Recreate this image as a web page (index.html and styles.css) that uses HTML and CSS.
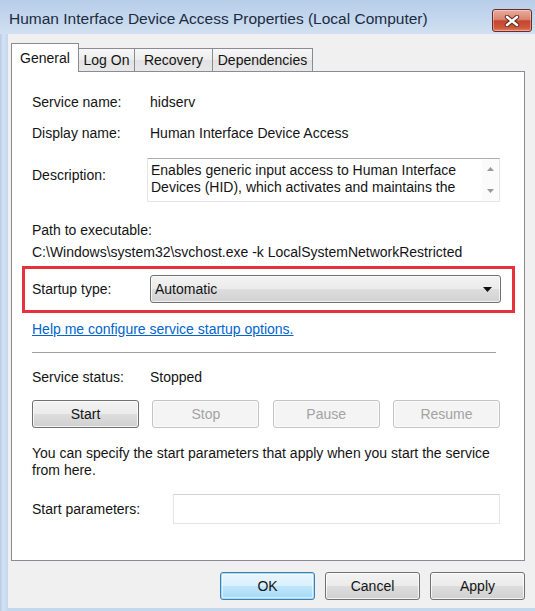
FILE: index.html
```html
<!DOCTYPE html>
<html>
<head>
<meta charset="utf-8">
<title>Human Interface Device Access Properties</title>
<link rel="stylesheet" href="styles.css">
</head>
<body>
<div class="window">
  <header class="titlebar">
    <span class="title">Human Interface Device Access Properties (Local Computer)</span>
    <div class="close">
      <svg width="16" height="12" viewBox="0 0 16 12">
        <path d="M3 2 L13 10 M13 2 L3 10" stroke="#5b211a" stroke-width="4.4" stroke-linecap="round"/>
        <path d="M3 2 L13 10 M13 2 L3 10" stroke="#ffffff" stroke-width="2.6" stroke-linecap="round"/>
      </svg>
    </div>
  </header>
  <div class="client">
    <div class="tabs">
      <div class="tab active t-general">General</div>
      <div class="tab t-logon">Log On</div>
      <div class="tab t-recovery">Recovery</div>
      <div class="tab t-deps">Dependencies</div>
    </div>
    <div class="panel">
      <div class="field r1"><span class="label">Service name:</span><span class="value">hidserv</span></div>
      <div class="field r2"><span class="label">Display name:</span><span class="value">Human Interface Device Access</span></div>
      <div class="field desc-row">
        <span class="label desc-label">Description:</span>
        <div class="desc">
          <div class="desc-text">Enables generic input access to Human Interface<br>Devices (HID), which activates and maintains the</div>
          <div class="scroll">
            <svg width="7" height="4" viewBox="0 0 7 4"><path d="M0 4 L3.5 0 L7 4 Z" fill="#9a9a9a"/></svg>
            <svg width="7" height="4" viewBox="0 0 7 4"><path d="M0 0 L3.5 4 L7 0 Z" fill="#9a9a9a"/></svg>
          </div>
        </div>
      </div>
      <div class="path">
        <div>Path to executable:</div>
        <div>C:\Windows\system32\svchost.exe -k LocalSystemNetworkRestricted</div>
      </div>
      <div class="highlight">
        <div class="field startup">
          <span class="label">Startup type:</span>
          <div class="combo">
            <span>Automatic</span>
            <svg width="9" height="5" viewBox="0 0 9 5"><path d="M0 0 L9 0 L4.5 5 Z" fill="#111"/></svg>
          </div>
        </div>
      </div>
      <a class="link" href="#">Help me configure service startup options.</a>
      <div class="sep"></div>
      <div class="field status"><span class="label">Service status:</span><span class="value">Stopped</span></div>
      <div class="ctrl-buttons">
        <button class="btn">Start</button>
        <button class="btn disabled">Stop</button>
        <button class="btn disabled">Pause</button>
        <button class="btn disabled">Resume</button>
      </div>
      <p class="note">You can specify the start parameters that apply when you start the service<br>from here.</p>
      <div class="field params"><span class="label">Start parameters:</span><div class="input"></div></div>
    </div>
    <div class="footer">
      <button class="btn dlg default">OK</button>
      <button class="btn dlg">Cancel</button>
      <button class="btn dlg">Apply</button>
    </div>
  </div>
</div>
</body>
</html>
```

FILE: styles.css
```css
* { box-sizing: border-box; }
html, body { margin: 0; padding: 0; background: #f0f0f0; }

.window {
  width: 535px;
  height: 611px;
  display: flex;
  flex-direction: column;
  overflow: hidden;
  background: linear-gradient(to right, #b4cbe6 0, #d4e2f2 3px, #c3d7ed 8px, #c3d7ed 100%);
  font-family: "Liberation Sans", Arial, sans-serif;
  font-size: 14px;
  color: #141414;
}

.titlebar {
  height: 34px;
  flex-shrink: 0;
  display: flex;
  align-items: flex-start;
  background: linear-gradient(#b8cee8, #c4d7ee 55%, #d2e1f1);
}
.title {
  margin: 9px 0 0 9px;
  font-size: 15.5px;
  line-height: 20px;
  color: #1c2c40;
  white-space: nowrap;
}
.close {
  margin: 9px 3px 0 auto;
  width: 40px;
  height: 23px;
  border: 1px solid #6a2c24;
  border-radius: 3px;
  background: linear-gradient(#e9ab9c, #d98470 45%, #c5452c 52%, #d0583c 85%, #e0866a);
  box-shadow: inset 0 0 0 1px rgba(255, 255, 255, 0.35);
  display: flex;
  align-items: center;
  justify-content: center;
}

.client {
  flex: 1;
  margin: 0 0 3px 8px;
  padding: 9px 10px 0 3px;
  background: #f0f0f0;
  display: flex;
  flex-direction: column;
}

.tabs {
  display: flex;
  align-items: flex-end;
  height: 29px;
  margin-bottom: -1px;
  position: relative;
  z-index: 1;
}
.tab {
  height: 23px;
  margin-bottom: 1px;
  margin-left: -1px;
  border: 1px solid #898c95;
  border-bottom: none;
  background: linear-gradient(#f7f7f7, #ececec 50%, #e2e2e2 52%, #e8e8e8);
  text-align: center;
  line-height: 22px;
  white-space: nowrap;
}
.tab.active {
  height: 29px;
  margin-bottom: 0;
  margin-left: 0;
  background: #ffffff;
  line-height: 28px;
  position: relative;
  z-index: 2;
}
.t-general { width: 68px; }
.t-logon { width: 57px; }
.t-recovery { width: 79px; }
.t-deps { width: 101px; }

.panel {
  border: 1px solid #898c95;
  background: #ffffff;
  padding: 21px 24px 36px 20px;
  display: flex;
  flex-direction: column;
  line-height: 18px;
}

.field {
  display: flex;
  align-items: center;
}
.label {
  width: 118px;
  flex-shrink: 0;
}
.r2 { margin-top: 13px; }

.desc-row {
  margin-top: 16px;
  align-items: flex-start;
}
.desc-label {
  margin-top: 8px;
  width: 115px;
}
.desc {
  flex: 1;
  height: 44px;
  display: flex;
  border: 1px solid #e2e6ea;
  border-top-color: #abadb3;
  background: #ffffff;
}
.desc-text {
  flex: 1;
  overflow: hidden;
  white-space: nowrap;
  padding: 3px 0 0 3px;
  line-height: 17px;
}
.scroll {
  width: 17px;
  display: flex;
  flex-direction: column;
  justify-content: space-between;
  align-items: center;
  padding: 8px 0 8px;
  background: #fbfbfb;
}

.path {
  margin-top: 17px;
  line-height: 22px;
}

.highlight {
  margin: 3px -15px 0 -10px;
  border: 3px solid #e6323c;
  padding: 6px 11px 7px 7px;
}
.combo {
  flex: 1;
  height: 28px;
  border: 1px solid #707070;
  border-radius: 3px;
  background: linear-gradient(#f3f3f3, #ebebeb 50%, #dddddd 51%, #d2d2d2);
  box-shadow: inset 0 0 0 1px rgba(255, 255, 255, 0.7);
  display: flex;
  align-items: center;
  justify-content: space-between;
  padding: 0 8px 0 4px;
}

.link {
  margin-top: 7px;
  color: #0066cc;
  text-decoration: underline;
  align-self: flex-start;
}

.sep {
  margin-top: 14px;
  margin-right: 4px;
  height: 2px;
  border-top: 1px solid #a0a0a0;
  border-bottom: 1px solid #ffffff;
}

.status { margin-top: 14px; }

.ctrl-buttons {
  margin-top: 14px;
  display: flex;
  justify-content: space-between;
}

.btn {
  font-family: inherit;
  font-size: 14px;
  color: #141414;
  height: 28px;
  width: 107px;
  padding: 0;
  border: 1px solid #707070;
  border-radius: 3px;
  background: linear-gradient(#f3f3f3, #ebebeb 50%, #dddddd 51%, #d0d0d0);
  box-shadow: inset 0 0 0 1px rgba(255, 255, 255, 0.75);
}
.btn.disabled {
  color: #a3a3a3;
  border-color: #c4c4c4;
  background: #f4f4f4;
  box-shadow: inset 0 0 0 1px #fbfbfb;
}

.note {
  margin: 17px 0 0;
  line-height: 17px;
  white-space: nowrap;
}

.params { margin-top: 15px; }
.input {
  flex: 1;
  height: 30px;
  margin-left: 23px;
  border: 1px solid #e6e6e6;
  border-top-color: #d2d2d2;
  background: #ffffff;
}

.footer {
  display: flex;
  justify-content: flex-end;
  gap: 10px;
  padding-top: 11px;
}
.btn.dlg { width: 95px; }
.btn.default {
  border-color: #3c7fb1;
  box-shadow: inset 0 0 0 1px #a6dcf6, inset 0 0 0 2px rgba(255, 255, 255, 0.5);
  background: linear-gradient(#eaf6fd, #d9f0fc 50%, #bee6fd 51%, #a7d9f5);
}
```
